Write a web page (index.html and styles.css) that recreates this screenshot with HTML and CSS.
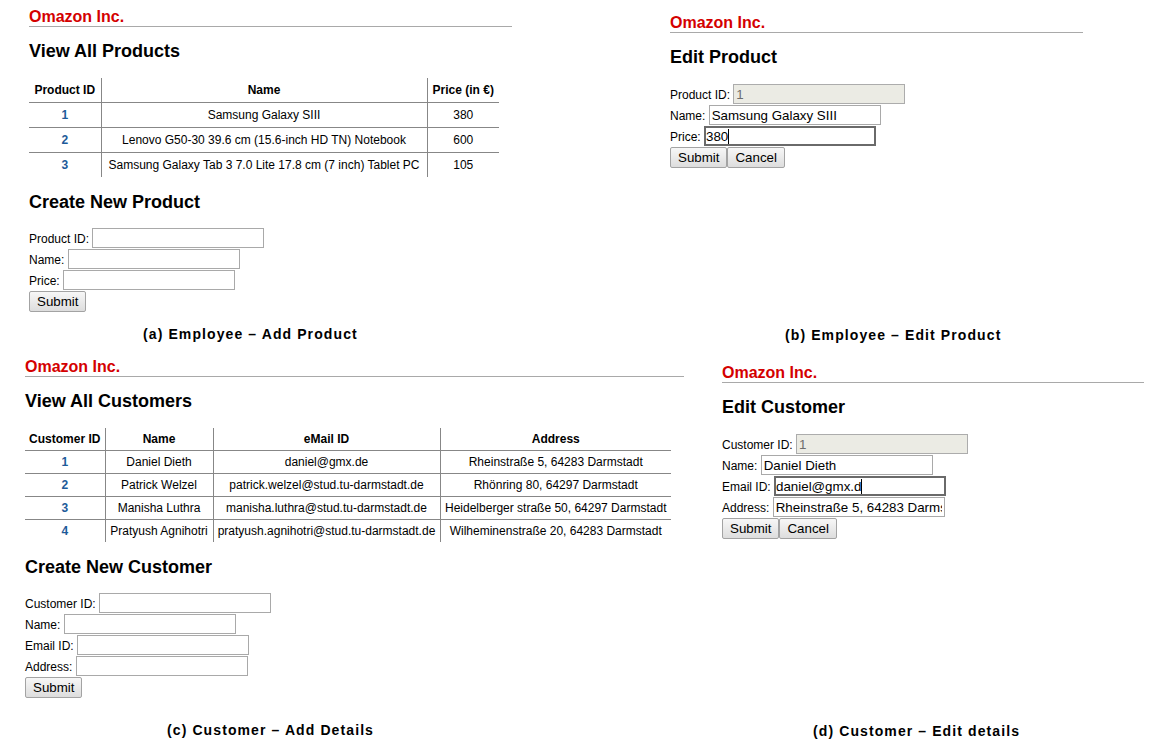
FILE: index.html
```html
<!DOCTYPE html>
<html lang="en">
<head>
<meta charset="utf-8">
<title>Omazon Inc. – Screens</title>
<link rel="stylesheet" href="styles.css">
</head>
<body>
<main class="figure">
  <div class="fig-row row-top">
    <section class="fig fig-a">
      <div class="brand">Omazon Inc.</div>
      <h2 class="title">View All Products</h2>
      <table class="data-table products">
        <colgroup><col class="c-pid"><col class="c-pname"><col class="c-price"></colgroup>
        <thead><tr><th>Product ID</th><th>Name</th><th>Price (in €)</th></tr></thead>
        <tbody>
          <tr><td class="id">1</td><td>Samsung Galaxy SIII</td><td>380</td></tr>
          <tr><td class="id">2</td><td>Lenovo G50-30 39.6 cm (15.6-inch HD TN) Notebook</td><td>600</td></tr>
          <tr><td class="id">3</td><td>Samsung Galaxy Tab 3 7.0 Lite 17.8 cm (7 inch) Tablet PC</td><td>105</td></tr>
        </tbody>
      </table>
      <h2 class="title title-sub">Create New Product</h2>
      <form class="form">
        <div class="field"><label>Product ID:</label><input class="input" type="text"></div>
        <div class="field"><label>Name:</label><input class="input" type="text"></div>
        <div class="field"><label>Price:</label><input class="input" type="text"></div>
        <div class="actions"><button type="button" class="btn">Submit</button></div>
      </form>
      <p class="caption cap-a">(a) Employee – Add Product</p>
    </section>

    <section class="fig fig-b">
      <div class="brand">Omazon Inc.</div>
      <h2 class="title">Edit Product</h2>
      <form class="form form-edit">
        <div class="field"><label>Product ID:</label><input class="input" type="text" value="1" disabled></div>
        <div class="field"><label>Name:</label><input class="input" type="text" value="Samsung Galaxy SIII"></div>
        <div class="field"><label>Price:</label><span class="focus-wrap"><input class="input is-focused" type="text" value="380"><span class="caret caret-price"></span></span></div>
        <div class="actions"><button type="button" class="btn">Submit</button><button type="button" class="btn">Cancel</button></div>
      </form>
      <p class="caption cap-b">(b) Employee – Edit Product</p>
    </section>
  </div>

  <div class="fig-row row-bottom">
    <section class="fig fig-c">
      <div class="brand">Omazon Inc.</div>
      <h2 class="title">View All Customers</h2>
      <table class="data-table customers">
        <colgroup><col class="c-cid"><col class="c-cname"><col class="c-mail"><col class="c-addr"></colgroup>
        <thead><tr><th>Customer ID</th><th>Name</th><th>eMail ID</th><th>Address</th></tr></thead>
        <tbody>
          <tr><td class="id">1</td><td>Daniel Dieth</td><td>daniel@gmx.de</td><td>Rheinstraße 5, 64283 Darmstadt</td></tr>
          <tr><td class="id">2</td><td>Patrick Welzel</td><td>patrick.welzel@stud.tu-darmstadt.de</td><td>Rhönring 80, 64297 Darmstadt</td></tr>
          <tr><td class="id">3</td><td>Manisha Luthra</td><td>manisha.luthra@stud.tu-darmstadt.de</td><td>Heidelberger straße 50, 64297 Darmstadt</td></tr>
          <tr><td class="id">4</td><td>Pratyush Agnihotri</td><td>pratyush.agnihotri@stud.tu-darmstadt.de</td><td>Wilheminenstraße 20, 64283 Darmstadt</td></tr>
        </tbody>
      </table>
      <h2 class="title title-sub">Create New Customer</h2>
      <form class="form">
        <div class="field"><label>Customer ID:</label><input class="input" type="text"></div>
        <div class="field"><label>Name:</label><input class="input" type="text"></div>
        <div class="field"><label>Email ID:</label><input class="input" type="text"></div>
        <div class="field"><label>Address:</label><input class="input" type="text"></div>
        <div class="actions"><button type="button" class="btn">Submit</button></div>
      </form>
      <p class="caption cap-c">(c) Customer – Add Details</p>
    </section>

    <section class="fig fig-d">
      <div class="brand">Omazon Inc.</div>
      <h2 class="title">Edit Customer</h2>
      <form class="form form-edit">
        <div class="field"><label>Customer ID:</label><input class="input" type="text" value="1" disabled></div>
        <div class="field"><label>Name:</label><input class="input" type="text" value="Daniel Dieth"></div>
        <div class="field"><label>Email ID:</label><span class="focus-wrap"><input class="input is-focused" type="text" value="daniel@gmx.d"><span class="caret caret-mail"></span></span></div>
        <div class="field"><label>Address:</label><input class="input" type="text" value="Rheinstraße 5, 64283 Darmstadt"></div>
        <div class="actions"><button type="button" class="btn">Submit</button><button type="button" class="btn">Cancel</button></div>
      </form>
      <p class="caption cap-d">(d) Customer – Edit details</p>
    </section>
  </div>
</main>
</body>
</html>
```

FILE: styles.css
```css
html, body {
  margin: 0;
  padding: 0;
  background: #ffffff;
}

body {
  width: 1150px;
  height: 746px;
  overflow: hidden;
  font-family: "Liberation Sans", Arial, sans-serif;
  color: #000;
}

.figure {
  display: flex;
  flex-direction: column;
}

.fig-row {
  display: flex;
  align-items: flex-start;
}

.row-top { height: 350px; }
.row-bottom { height: 396px; }

.fig {
  display: flex;
  flex-direction: column;
  align-items: flex-start;
}

.fig-a { margin-left: 29px; width: 483px; padding-top: 8px; }
.fig-b { margin-left: 158px; width: 413px; padding-top: 14px; }
.fig-c { margin-left: 25px; width: 659px; padding-top: 8px; }
.fig-d { margin-left: 38px; width: 422px; padding-top: 14px; }

.brand {
  align-self: stretch;
  font-size: 16px;
  line-height: 18px;
  font-weight: 700;
  color: #d40000;
  border-bottom: 1px solid #a9a9a9;
}

.title {
  margin: 14px 0 0;
  font-size: 18px;
  line-height: 21px;
  font-weight: 700;
}

.title-sub { margin-top: 15px; }

.data-table {
  margin-top: 16px;
  border-collapse: collapse;
  table-layout: fixed;
  font-size: 12px;
  line-height: 16px;
}

.data-table th,
.data-table td {
  text-align: center;
  white-space: nowrap;
  overflow: hidden;
  border: 0 solid #878787;
}

.data-table th + th,
.data-table td + td {
  border-left-width: 1px;
}

.data-table td {
  border-top-width: 1px;
}

.data-table th { font-weight: 700; }

.data-table .id {
  font-weight: 700;
  color: #1d5b99;
}

.products { width: 470px; }
.products th, .products td { padding: 4px 4px; }
.c-pid { width: 72px; }
.c-pname { width: 326px; }
.c-price { width: 72px; }

.customers { width: 646px; }
.customers th, .customers td { padding: 3px 3px; }
.c-cid { width: 80px; }
.c-cname { width: 108px; }
.c-mail { width: 227px; }
.c-addr { width: 231px; }

.form {
  margin: 15px 0 0;
  display: flex;
  flex-direction: column;
}

.form-edit { margin-top: 16px; }

.field {
  display: flex;
  align-items: baseline;
  gap: 3.33px;
  height: 21px;
}

.field label {
  font-size: 12px;
}

.input {
  box-sizing: border-box;
  width: 172px;
  height: 20px;
  margin: 0;
  padding: 1px 2px;
  border: 1px solid #a9a9a9;
  border-radius: 0;
  background: #fff;
  font-family: "Liberation Sans", Arial, sans-serif;
  font-size: 13.33px;
  color: #000;
  outline: none;
}

.input:disabled {
  background: #ebebe4;
  color: #6d6d6d;
  border-color: #acacac;
}

.input.is-focused {
  border: 2px solid #6a6a6a;
  padding: 0 0;
}

.focus-wrap {
  position: relative;
  display: inline-block;
}

.caret {
  position: absolute;
  top: 3px;
  width: 1px;
  height: 15px;
  background: #000;
}

.caret-price { left: 24px; }
.caret-mail { left: 87px; }

.actions {
  display: flex;
  height: 21px;
}

.btn {
  box-sizing: border-box;
  height: 21px;
  margin: 0;
  padding: 0 7px;
  border: 1px solid #a3a3a3;
  border-radius: 2px;
  background: linear-gradient(#f7f7f7, #dddddd);
  font-family: "Liberation Sans", Arial, sans-serif;
  font-size: 13.33px;
  line-height: 18px;
  color: #000;
}

.caption {
  margin: 0;
  font-size: 14px;
  line-height: 16px;
  font-weight: 700;
  letter-spacing: 1.1px;
  white-space: nowrap;
}

.cap-a { margin-top: 14px; margin-left: 114px; }
.cap-b { margin-top: 159px; margin-left: 115px; }
.cap-c { margin-top: 24px; margin-left: 142px; }
.cap-d { margin-top: 184px; margin-left: 91px; }
```
